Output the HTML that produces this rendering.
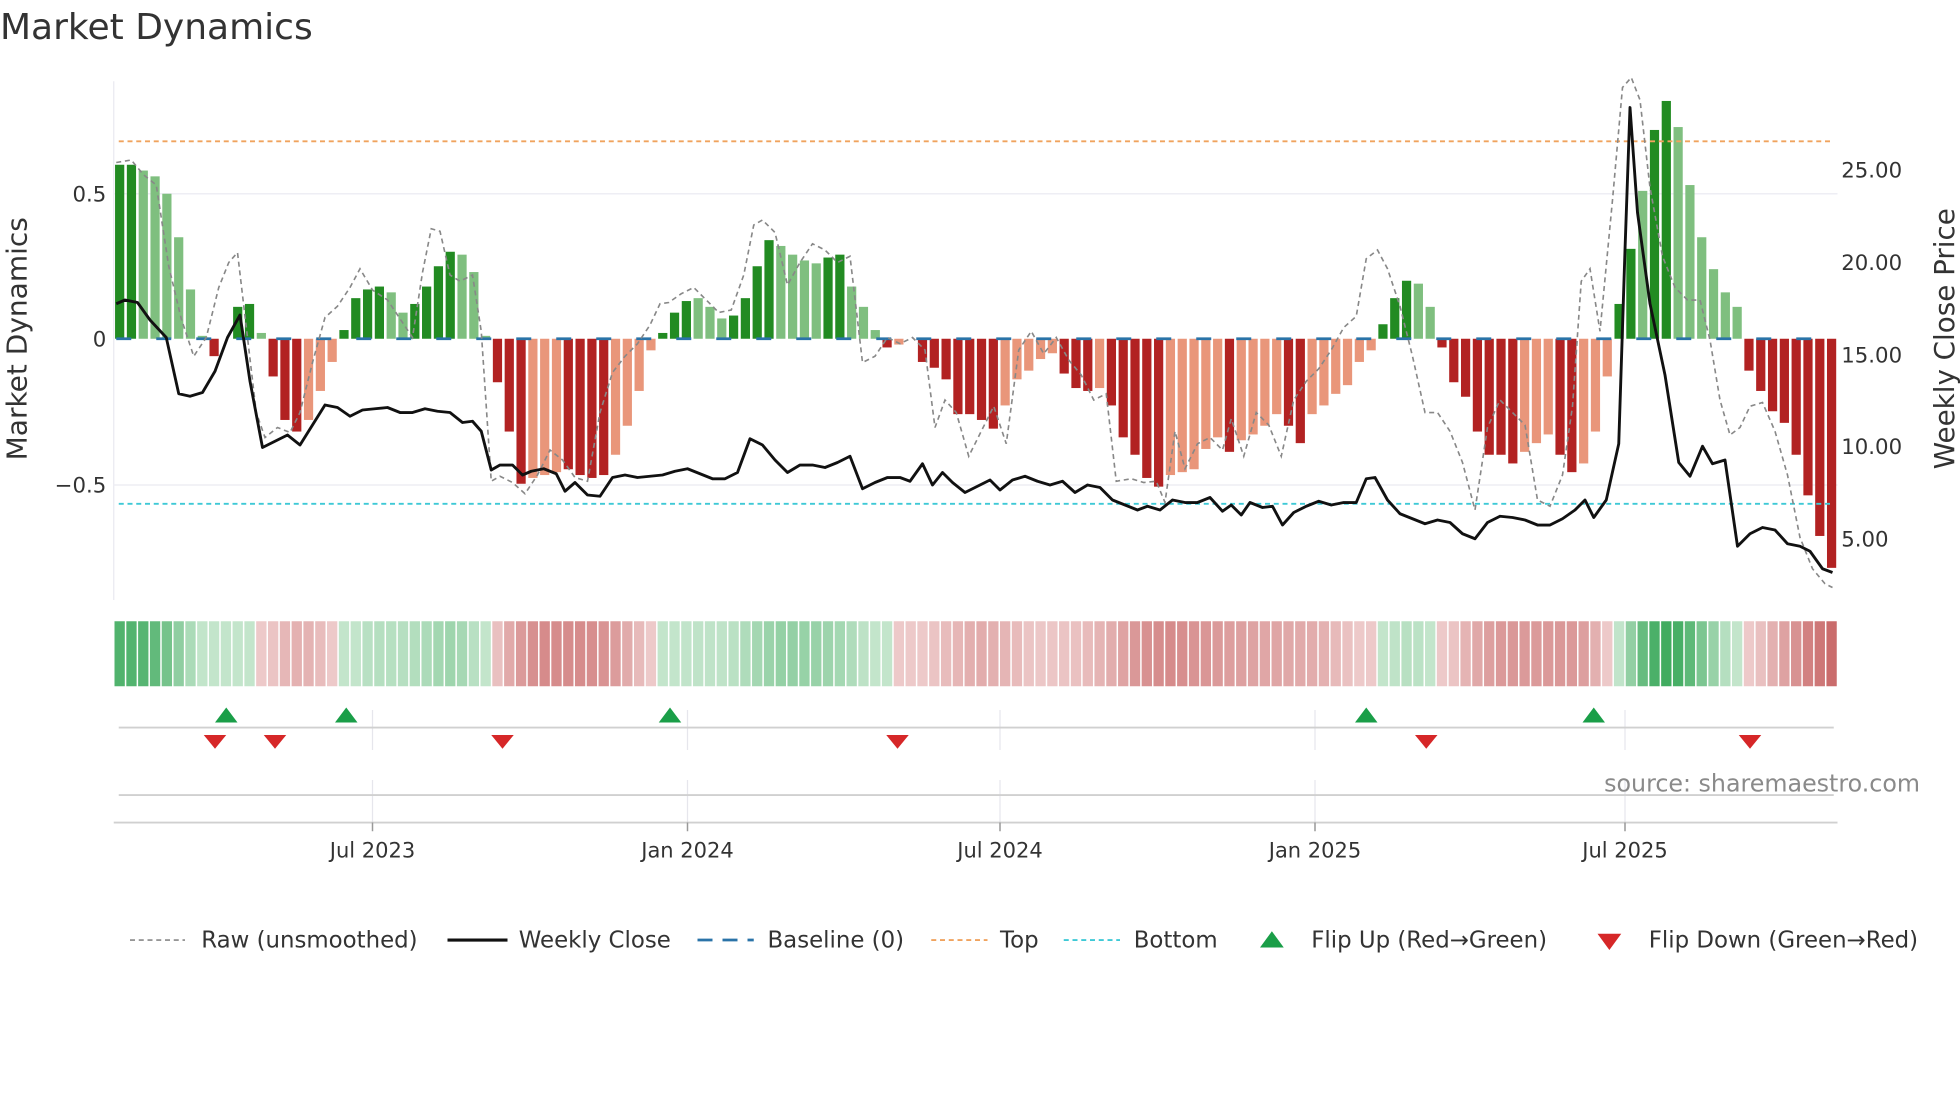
<!DOCTYPE html>
<html><head><meta charset="utf-8">
<style>
html,body{margin:0;padding:0;background:#fff;}
svg{display:block;font-family:"DejaVu Sans","Liberation Sans",sans-serif;}
</style></head>
<body>
<svg id="s" width="1960" height="1102" viewBox="0 0 1568 881.6" xmlns="http://www.w3.org/2000/svg">
<rect width="1568" height="881.6" fill="#fff"/>
<text x="0" y="31" font-size="28.8" fill="#333">Market Dynamics</text>
<line x1="91" y1="65" x2="91" y2="480" stroke="#eaeaf0" stroke-width="1"/>
<line x1="91" y1="155" x2="1470" y2="155" stroke="#eeeef4" stroke-width="1.2"/>
<line x1="91" y1="388" x2="1470" y2="388" stroke="#eeeef4" stroke-width="1.2"/>
<g font-size="17" fill="#333">
<text x="85" y="161" text-anchor="end">0.5</text>
<text x="85" y="277" text-anchor="end">0</text>
<text x="85" y="394" text-anchor="end">−0.5</text>
<text x="1473" y="142">25.00</text>
<text x="1473" y="216">20.00</text>
<text x="1473" y="290">15.00</text>
<text x="1473" y="363">10.00</text>
<text x="1473" y="437">5.00</text>
</g>
<text transform="translate(21,271) rotate(-90)" font-size="22.4" fill="#333" text-anchor="middle">Market Dynamics</text>
<text transform="translate(1563,271) rotate(-90)" font-size="22.2" fill="#333" text-anchor="middle">Weekly Close Price</text>
<g id="bars"></g>
<g id="heat"></g>
<line x1="95" y1="113" x2="1467" y2="113" stroke="#f0a35e" stroke-width="1.5" stroke-dasharray="4,3"/>
<line x1="95" y1="403" x2="1467" y2="403" stroke="#3ec9d6" stroke-width="1.5" stroke-dasharray="4,3"/>
<line x1="93" y1="271" x2="1467" y2="271" stroke="#2a73a8" stroke-width="2.2" stroke-dasharray="12,20"/>
<polyline id="raw" fill="none" stroke="#888" stroke-width="1.3" stroke-dasharray="4,3"/>
<polyline id="close" fill="none" stroke="#111" stroke-width="2.3" stroke-linejoin="round"/>
<g stroke="#e6e6ec" stroke-width="1">
<line x1="298" y1="568" x2="298" y2="600"/><line x1="550" y1="568" x2="550" y2="600"/><line x1="800" y1="568" x2="800" y2="600"/><line x1="1052" y1="568" x2="1052" y2="600"/><line x1="1300" y1="568" x2="1300" y2="600"/>
<line x1="298" y1="624" x2="298" y2="658"/><line x1="550" y1="624" x2="550" y2="658"/><line x1="800" y1="624" x2="800" y2="658"/><line x1="1052" y1="624" x2="1052" y2="658"/><line x1="1300" y1="624" x2="1300" y2="658"/>
</g>
<line x1="95" y1="582" x2="1467" y2="582" stroke="#d0d0d0" stroke-width="1.5"/>
<line x1="95" y1="636" x2="1467" y2="636" stroke="#d0d0d0" stroke-width="1.5"/>
<line x1="91" y1="658" x2="1470" y2="658" stroke="#d0d0d0" stroke-width="1.5"/>
<g stroke="#999" stroke-width="1.2">
<line x1="298" y1="658" x2="298" y2="665"/><line x1="550" y1="658" x2="550" y2="665"/><line x1="800" y1="658" x2="800" y2="665"/><line x1="1052" y1="658" x2="1052" y2="665"/><line x1="1300" y1="658" x2="1300" y2="665"/>
</g>
<g id="flips"></g>
<g font-size="16.8" fill="#333" text-anchor="middle">
<text x="298" y="686">Jul 2023</text><text x="550" y="686">Jan 2024</text><text x="800" y="686">Jul 2024</text><text x="1052" y="686">Jan 2025</text><text x="1300" y="686">Jul 2025</text>
</g>
<text x="1536" y="633" font-size="19" fill="#8a8a8a" text-anchor="end">source: sharemaestro.com</text>
<g font-size="18.3" fill="#333">
<line x1="104" y1="752" x2="148" y2="752" stroke="#888" stroke-width="1.3" stroke-dasharray="4,3"/>
<text x="161" y="758">Raw (unsmoothed)</text>
<line x1="358" y1="752" x2="406" y2="752" stroke="#111" stroke-width="2.5"/>
<text x="415" y="758">Weekly Close</text>
<line x1="558" y1="752" x2="603" y2="752" stroke="#2a73a8" stroke-width="2.2" stroke-dasharray="12,8"/>
<text x="614" y="758">Baseline (0)</text>
<line x1="745" y1="752" x2="790" y2="752" stroke="#f0a35e" stroke-width="1.5" stroke-dasharray="4,3"/>
<text x="800" y="758">Top</text>
<line x1="851" y1="752" x2="896" y2="752" stroke="#3ec9d6" stroke-width="1.5" stroke-dasharray="4,3"/>
<text x="907" y="758">Bottom</text>
<polygon points="1008,758 1027,758 1017.5,745" fill="#1a9e48"/>
<text x="1049" y="758">Flip Up (Red→Green)</text>
<polygon points="1278,747 1297,747 1287.5,760" fill="#d62728"/>
<text x="1319" y="758">Flip Down (Green→Red)</text>
</g>
</svg>
<script>
var NS="http://www.w3.org/2000/svg";
function el(t,a,p){var e=document.createElementNS(NS,t);for(var k in a)e.setAttribute(k,a[k]);document.getElementById(p).appendChild(e);return e;}
var B=[[.6,1],[.6,1],[.58,0],[.56,0],[.5,0],[.35,0],[.17,0],[.01,0],[-.06,1],[0,0],[.11,1],[.12,1],[.02,0],[-.13,1],[-.28,1],[-.32,1],[-.28,0],[-.18,0],[-.08,0],[.03,1],[.14,1],[.17,1],[.18,1],[.16,0],[.09,0],[.12,1],[.18,1],[.25,1],[.3,1],[.29,0],[.23,0],[.01,0],
[-.15,1],[-.32,1],[-.5,1],[-.48,0],[-.47,0],[-.46,0],[-.45,1],[-.47,1],[-.48,1],[-.47,1],[-.4,0],[-.3,0],[-.18,0],[-.04,0],
[.02,1],[.09,1],[.13,1],[.14,0],[.11,0],[.07,0],[.08,1],[.14,1],[.25,1],[.34,1],[.32,0],[.29,0],[.27,0],[.26,0],[.28,1],[.29,1],[.18,0],[.11,0],[.03,0],
[-.03,1],[-.02,0],[0,0],[-.08,1],[-.1,1],[-.14,1],[-.26,1],[-.26,1],[-.28,1],[-.31,1],[-.23,0],[-.14,0],[-.11,0],[-.07,0],[-.05,0],[-.12,1],[-.17,1],[-.18,1],[-.17,0],[-.23,1],[-.34,1],[-.4,1],[-.48,1],[-.51,1],[-.47,0],[-.46,0],[-.45,0],[-.38,0],[-.34,0],[-.39,1],[-.35,0],[-.33,0],[-.3,0],[-.26,0],[-.3,1],[-.36,1],[-.26,0],[-.23,0],[-.19,0],[-.16,0],[-.08,0],[-.04,0],
[.05,1],[.14,1],[.2,1],[.19,0],[.11,0],
[-.03,1],[-.15,1],[-.2,1],[-.32,1],[-.4,1],[-.4,1],[-.43,1],[-.39,0],[-.36,0],[-.33,0],[-.4,1],[-.46,1],[-.43,0],[-.32,0],[-.13,0],
[.12,1],[.31,1],[.51,0],[.72,1],[.82,1],[.73,0],[.53,0],[.35,0],[.24,0],[.16,0],[.11,0],
[-.11,1],[-.18,1],[-.25,1],[-.29,1],[-.4,1],[-.54,1],[-.68,1],[-.79,1]];
var N=B.length,x0=91,x1=1470,sp=(x1-x0)/N,bw=sp*0.78,K=232,Z=271;
for(var i=0;i<N;i++){var v=B[i][0],d=B[i][1],x=x0+i*sp+(sp-bw)/2;
 var c=v>=0?(d?"#228b22":"#7fbf7f"):(d?"#b22222":"#e9967a");
 var h=Math.abs(v)*K;
 if(h>=0.5) el("rect",{x:x.toFixed(2),y:(v>=0?Z-h:Z).toFixed(2),width:bw.toFixed(2),height:h.toFixed(2),fill:c},"bars");
 var s=0,n=0;for(var j=Math.max(0,i-2);j<=Math.min(N-1,i+2);j++){s+=B[j][0];n++;}s/=n;
 var a=Math.max(0.12,Math.min(1,Math.abs(s)/0.75)),col;
 if(s>=0){col="rgb("+Math.round(215-170*a)+","+Math.round(238-75*a)+","+Math.round(220-140*a)+")";}
 else{col="rgb("+Math.round(242-45*a)+","+Math.round(215-120*a)+","+Math.round(215-120*a)+")";}
 el("rect",{x:(x0+i*sp+0.6).toFixed(2),y:497,width:(sp-1.2).toFixed(2),height:52,fill:col},"heat");
}
var R="93,130 105,128 115,140 125,148 135,213 145,255 155,285 165,270 175,230 183,210 190,202 198,270 205,330 212,350 222,342 232,346 240,330 250,290 260,254 270,245 280,230 288,215 298,232 310,240 320,255 330,270 338,218 345,183 352,185 360,220 368,225 378,220 385,265 393,385 400,381 410,386 420,395 430,380 440,360 450,368 460,382 470,385 480,330 490,298 500,285 510,275 520,260 528,243 535,242 545,235 555,230 565,240 575,250 585,248 595,220 603,180 610,176 620,186 630,228 640,210 650,195 660,200 670,210 680,205 690,290 700,285 710,270 720,275 730,270 740,280 748,342 756,320 765,330 775,365 785,345 795,325 805,355 815,280 825,265 835,283 845,270 855,288 865,300 875,320 885,315 893,385 905,383 915,386 925,385 932,402 940,345 948,375 958,355 968,350 978,360 985,335 995,365 1005,330 1015,340 1025,365 1035,320 1045,305 1055,295 1065,280 1075,262 1085,253 1093,207 1102,200 1110,215 1120,245 1130,285 1140,330 1150,330 1160,345 1170,370 1180,408 1190,342 1200,320 1210,330 1220,340 1230,400 1240,405 1250,380 1258,325 1265,225 1272,215 1280,265 1290,160 1298,70 1305,62 1312,80 1320,150 1330,205 1340,230 1350,240 1360,240 1368,272 1376,320 1384,348 1392,342 1400,325 1410,322 1420,345 1430,380 1440,430 1450,455 1460,467 1466,470";
document.getElementById("raw").setAttribute("points",R);
var C="93,243 100,240 110,242 120,256 133,270 143,315 152,317 162,314 172,297 182,270 192,252 200,305 210,358 220,353 230,348 240,356 250,340 260,324 270,326 280,333 290,328 300,327 310,326 320,330 330,330 340,327 350,329 360,330 370,338 378,337 385,345 393,376 400,372 410,372 418,380 425,377 435,375 445,379 452,393 460,386 470,396 480,397 490,382 500,380 510,382 520,381 530,380 540,377 550,375 560,379 570,383 580,383 590,378 600,351 610,356 620,368 630,378 640,372 650,372 660,374 670,370 680,365 690,391 700,386 710,382 720,382 728,385 738,371 746,388 754,378 762,386 772,394 782,389 792,384 800,392 810,384 820,381 830,385 840,388 850,385 860,394 870,388 880,390 890,400 900,404 910,408 918,405 928,408 938,400 948,402 958,402 968,398 978,409 985,404 993,412 1000,402 1010,406 1018,405 1026,420 1035,410 1045,405 1055,401 1065,404 1075,402 1085,402 1093,383 1100,382 1110,400 1120,411 1130,415 1140,419 1150,416 1160,418 1170,427 1180,431 1190,418 1200,413 1210,414 1220,416 1230,420 1240,420 1250,415 1260,408 1268,400 1275,414 1285,400 1295,355 1300,200 1304,86 1310,170 1320,243 1332,300 1343,370 1352,381 1362,357 1370,371 1380,368 1390,437 1400,427 1410,422 1420,424 1430,435 1440,437 1448,441 1458,455 1466,458";
document.getElementById("close").setAttribute("points",C);
[181,277,536,1093,1275].forEach(function(x){el("polygon",{points:(x-9)+",578 "+(x+9)+",578 "+x+",566",fill:"#1a9e48"},"flips");});
[172,220,402,718,1141,1400].forEach(function(x){el("polygon",{points:(x-9)+",588 "+(x+9)+",588 "+x+",599",fill:"#d62728"},"flips");});
</script>
</body></html>
